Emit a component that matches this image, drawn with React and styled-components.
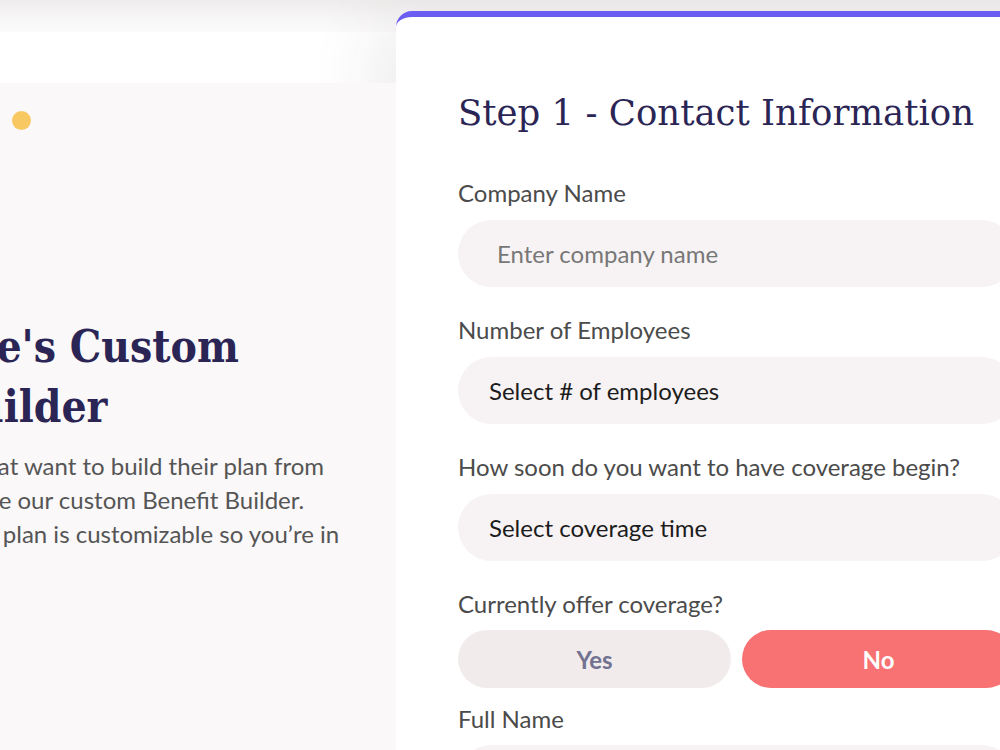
import styled, { createGlobalStyle } from "styled-components";

const GlobalStyle = createGlobalStyle`
  html, body {
    margin: 0;
    padding: 0;
    overflow: hidden;
    background: #ffffff;
  }
  * {
    box-sizing: border-box;
  }
`;

const Page = styled.div`
  width: 1000px;
  height: 750px;
  overflow: hidden;
  display: grid;
  grid-template-columns: 396px 1fr;
  background: linear-gradient(#eeecec 0px, #f7f6f6 18px, #fcfbfb 32px, #faf8f9 32px);
  font-family: Lato, "Open Sans", sans-serif;
`;

const Side = styled.div`
  display: flex;
  flex-direction: column;
`;

const TopSpace = styled.div`
  height: 32px;
`;

const Header = styled.div`
  height: 51px;
  background: #ffffff;
`;

const Hero = styled.section`
  position: relative;
  flex: 1;
  background: #faf8f9;
  padding: 234px 0 0 0;
`;

const Dot = styled.span`
  position: absolute;
  left: 12px;
  top: 28px;
  width: 19px;
  height: 19px;
  border-radius: 50%;
  background: #f8c962;
`;

// the hero copy starts left of the visible area
const HeroContent = styled.div`
  margin-left: -232px;
  width: 640px;
`;

const HeroTitle = styled.h1`
  margin: 0;
  font-family: "DejaVu Serif Condensed", "DejaVu Serif", serif;
  font-stretch: semi-condensed;
  font-weight: 700;
  font-size: 44px;
  line-height: 60px;
  color: #2b2555;
`;

const HeroText = styled.p`
  margin: 12px 0 0 0;
  font-size: 24px;
  line-height: 34px;
  color: #555555;
`;

const Main = styled.div`
  padding-top: 11px;
`;

const Card = styled.div`
  width: 690px;
  height: 760px;
  background: #ffffff;
  border-top: 6px solid #6b5cf2;
  border-radius: 16px 0 0 0;
  box-shadow: -20px 10px 70px rgba(70, 40, 55, 0.09);
  padding: 74px 0 0 62px;
`;

const Title = styled.h2`
  margin: 0 0 46px 0;
  font-family: "DejaVu Serif", "Liberation Serif", serif;
  font-weight: 400;
  font-size: 35.5px;
  line-height: 43px;
  color: #2b2555;
`;

const Form = styled.form`
  width: 557px;
  display: flex;
  flex-direction: column;
`;

const Field = styled.div`
  display: flex;
  flex-direction: column;
  margin-bottom: ${(p) => p.$gap || 30}px;
`;

const Label = styled.label`
  font-size: 24px;
  line-height: 26px;
  color: #4b4b4b;
  margin-bottom: ${(p) => p.$gap || 14}px;
`;

const Input = styled.input`
  height: 67px;
  border: none;
  border-radius: 34px;
  background: #f7f3f4;
  padding: 0 39px;
  font-family: Lato, sans-serif;
  font-size: 24px;
  color: #222222;
  outline: none;
  &::placeholder {
    color: #777777;
  }
`;

const Select = styled.div`
  height: 67px;
  border-radius: 34px;
  background: #f7f3f4;
  padding: 0 31px;
  display: flex;
  align-items: center;
  font-size: 24px;
  color: #1c1c1c;
`;

const Choices = styled.div`
  display: grid;
  grid-template-columns: 1fr 1fr;
  gap: 11px;
`;

const Choice = styled.button`
  height: 58px;
  border: none;
  border-radius: 29px;
  font-family: Lato, sans-serif;
  font-weight: 700;
  font-size: 24px;
  background: ${(p) => (p.$active ? "#f87173" : "#f1ebec")};
  color: ${(p) => (p.$active ? "#ffffff" : "#727290")};
  cursor: pointer;
`;

export default function App() {
  return (
    <>
      <GlobalStyle />
      <Page>
        <Side>
          <TopSpace />
          <Header />
          <Hero>
            <Dot />
            <HeroContent>
              <HeroTitle>
                HealthCare's Custom
                <br />
                Benefit Builder
              </HeroTitle>
              <HeroText>
                All small employers that want to build their plan from
                <br />
                scratch can instead use our custom Benefit Builder.
                <br />
                So every single health plan is customizable so you’re in
                <br />
                control.
              </HeroText>
            </HeroContent>
          </Hero>
        </Side>
        <Main>
          <Card>
            <Title>Step 1 - Contact Information</Title>
            <Form>
              <Field>
                <Label>Company Name</Label>
                <Input placeholder="Enter company name" />
              </Field>
              <Field>
                <Label>Number of Employees</Label>
                <Select>Select # of employees</Select>
              </Field>
              <Field>
                <Label>How soon do you want to have coverage begin?</Label>
                <Select>Select coverage time</Select>
              </Field>
              <Field $gap={18}>
                <Label $gap={13}>Currently offer coverage?</Label>
                <Choices>
                  <Choice type="button">Yes</Choice>
                  <Choice type="button" $active>
                    No
                  </Choice>
                </Choices>
              </Field>
              <Field>
                <Label $gap={13}>Full Name</Label>
                <Input placeholder="Enter full name" />
              </Field>
            </Form>
          </Card>
        </Main>
      </Page>
    </>
  );
}
